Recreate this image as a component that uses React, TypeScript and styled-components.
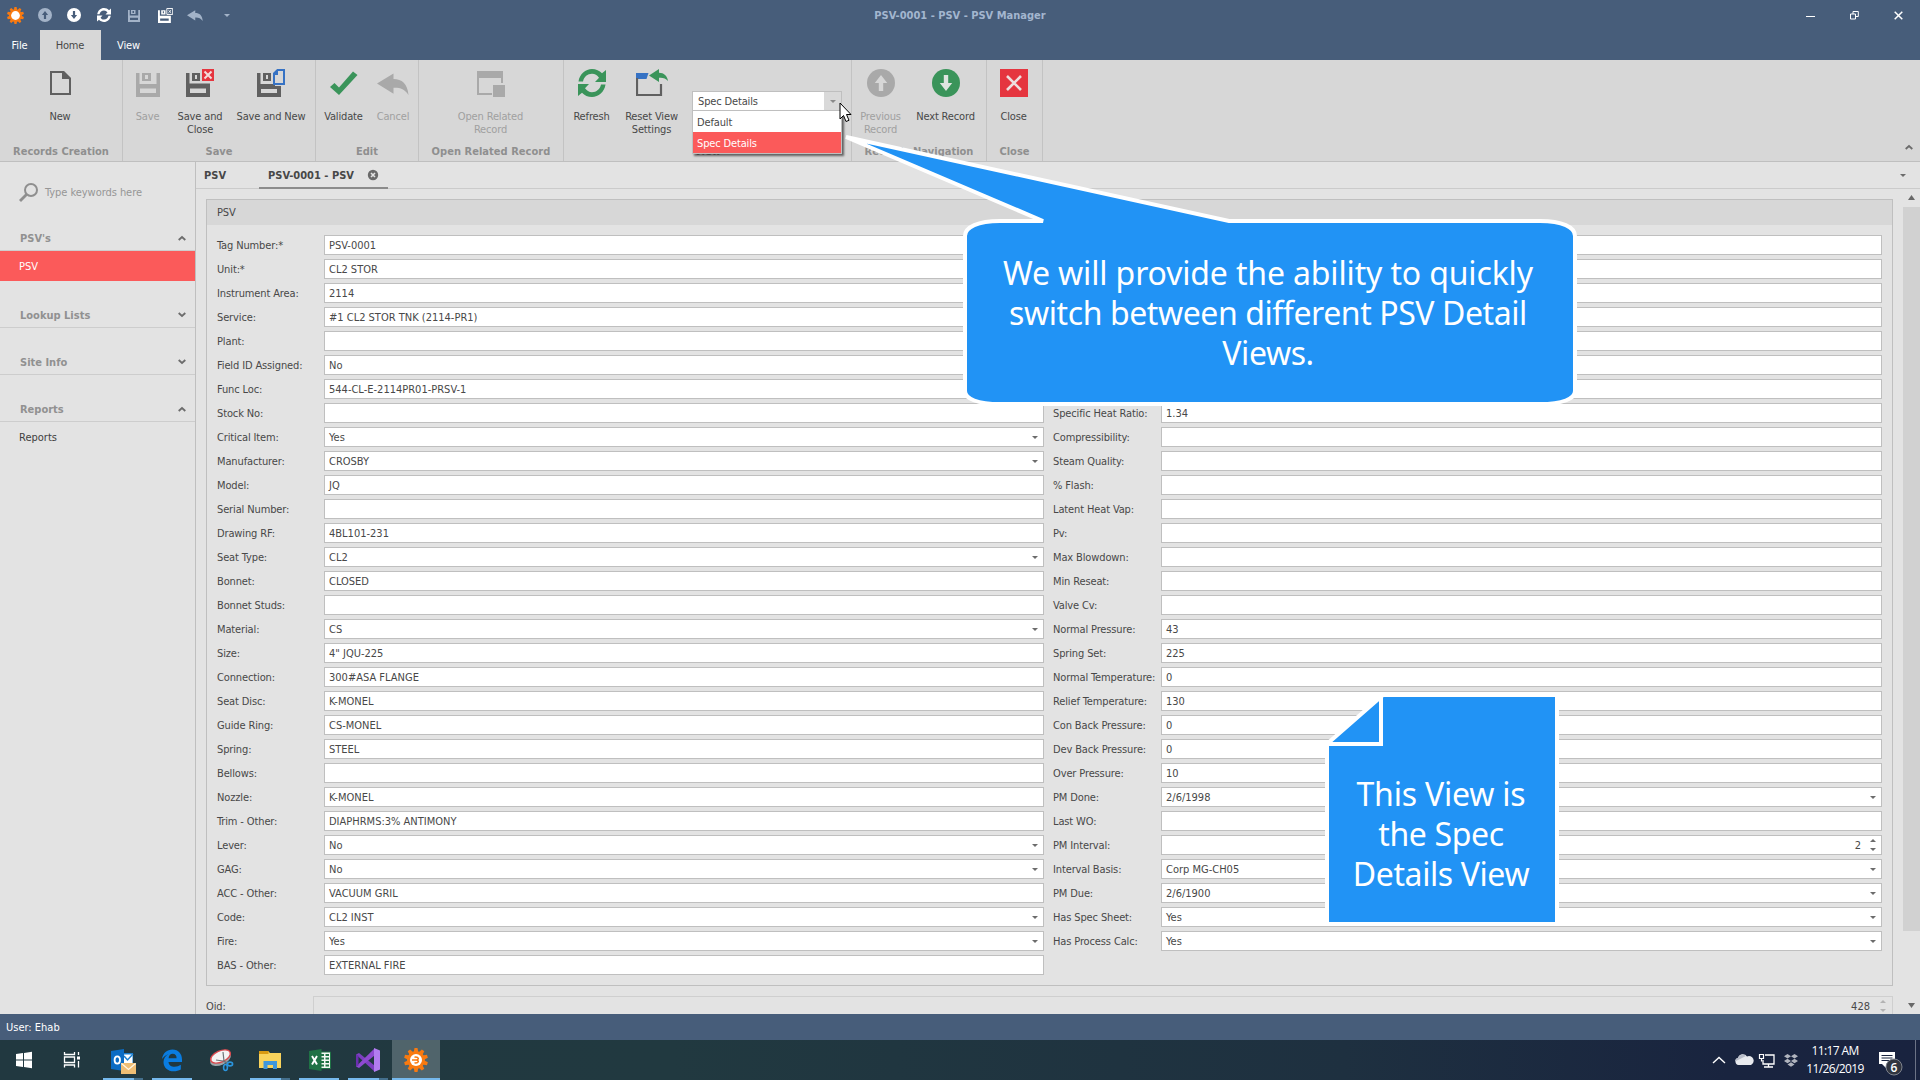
import React from 'react';
import styled, { createGlobalStyle } from 'styled-components';

const GlobalStyle = createGlobalStyle`
  * { box-sizing: border-box; }
  body {
    margin: 0;
    overflow: hidden;
    font: 11px/13px 'DejaVu Sans Condensed', 'DejaVu Sans', sans-serif;
    letter-spacing: -0.15px;
    color: #484848;
    white-space: nowrap;
  }
  svg { display: block; flex: none; }
`;

const NAVY = '#475d7a';
const BORDER = '#bfbfbf';
const GREY = '#a9a9a9';
const DARK = '#606060';
const GREEN = '#3a945a';
const RED = '#e5353f';
const BLUE = '#2193f5';

const Screen = styled.div`
  position: relative;
  width: 1920px;
  height: 1080px;
  display: flex;
  flex-direction: column;
  background: #e3e3e3;
  overflow: hidden;
`;

/* ---------- title bar ---------- */
const TitleBar = styled.header`
  height: 30px;
  background: ${NAVY};
  display: grid;
  grid-template-columns: 780px 360px 780px;
  align-items: center;
`;
const QuickAccess = styled.div`
  display: flex;
  align-items: center;
  padding-left: 1px;
`;
const QuickItem = styled.span<{ $w?: number }>`
  width: ${(p) => p.$w ?? 30}px;
  height: 30px;
  display: grid;
  place-items: center;
`;
const WindowTitle = styled.div`
  text-align: center;
  font-weight: bold;
  letter-spacing: 0;
  color: #a3b6cf;
`;
const WindowButtons = styled.div`
  display: flex;
  justify-content: flex-end;
`;
const WindowButton = styled.span`
  width: 44px;
  height: 30px;
  display: grid;
  place-items: center;
`;
const RibbonTabs = styled.nav`
  height: 30px;
  display: flex;
  background: ${NAVY};
`;
const RibbonTab = styled.div<{ $w: number; $active?: boolean }>`
  width: ${(p) => p.$w}px;
  display: grid;
  place-items: center;
  padding-right: 1px;
  background: ${(p) => (p.$active ? '#d7d7d7' : 'transparent')};
  color: ${(p) => (p.$active ? '#484848' : '#fff')};
`;

/* ---------- ribbon ---------- */
const Ribbon = styled.section`
  height: 102px;
  display: flex;
  background: #d7d7d7;
  border-bottom: 1px solid ${BORDER};
`;
const Group = styled.div<{ $w: number }>`
  width: ${(p) => p.$w}px;
  border-right: 1px solid #c3c3c3;
  display: flex;
  flex-direction: column;
`;
const GroupItems = styled.div<{ $pad: number }>`
  height: 85px;
  padding: 9px 0 0 ${(p) => p.$pad}px;
  display: flex;
`;
const GroupTitle = styled.div<{ $ls?: number }>`
  text-align: center;
  font-weight: bold;
  letter-spacing: ${(p) => p.$ls ?? 0}px;
  color: #8f8f8f;
`;
const RibbonButton = styled.div<{ $w: number; $off?: boolean }>`
  width: ${(p) => p.$w}px;
  display: flex;
  flex-direction: column;
  align-items: center;
  gap: 13px;
  text-align: center;
  white-space: pre-line;
  color: ${(p) => (p.$off ? '#a0a0a0' : '#484848')};
`;
const ComboArea = styled.div`
  padding: 22px 0 0 8px;
  position: relative;
`;
const Combo = styled.div`
  width: 150px;
  height: 20px;
  border: 1px solid ${BORDER};
  background: #fff;
  display: flex;
  align-items: center;
  justify-content: space-between;
  padding-left: 5px;
`;
const ComboButton = styled.span`
  width: 17px;
  height: 18px;
  display: grid;
  place-items: center;
  background: #d9d9d9;
`;
const Popup = styled.div`
  position: absolute;
  left: 8px;
  top: 41px;
  width: 150px;
  z-index: 5;
  border: 1px solid ${BORDER};
  box-shadow: 2px 2px 2px rgba(0, 0, 0, 0.55);
`;
const PopupItem = styled.div<{ $on?: boolean }>`
  height: 21px;
  padding: 2px 0 0 4px;
  display: flex;
  align-items: center;
  background: ${(p) => (p.$on ? '#fb5a5a' : '#fff')};
  color: ${(p) => (p.$on ? '#fff' : '#484848')};
`;
const RibbonCollapse = styled.div`
  flex: 1;
  display: flex;
  justify-content: flex-end;
  align-items: flex-end;
  padding: 0 7px 11px 0;
`;

/* ---------- body ---------- */
const Body = styled.div`
  height: 852px;
  display: flex;
`;
const Sidebar = styled.aside`
  width: 196px;
  border-right: 1px solid ${BORDER};
`;
const Search = styled.div`
  height: 65px;
  padding: 20px 0 0 19px;
  display: flex;
  gap: 7px;
  line-height: 21px;
  letter-spacing: -0.05px;
  color: #969696;
`;
const NavSection = styled.div`
  margin-bottom: 23px;
`;
const NavHeader = styled.div`
  height: 24px;
  padding: 0 9px 1px 20px;
  border-bottom: 1px solid #cdcdcd;
  display: flex;
  align-items: center;
  justify-content: space-between;
  font-weight: bold;
  letter-spacing: 0;
  color: #919191;
`;
const NavItem = styled.div<{ $on?: boolean }>`
  height: 30px;
  padding-left: 19px;
  display: flex;
  align-items: center;
  background: ${(p) => (p.$on ? '#fb5a5a' : 'transparent')};
  color: ${(p) => (p.$on ? '#fff' : '#404040')};
  letter-spacing: 0;
`;
const Main = styled.main`
  width: 1724px;
  display: flex;
  flex-direction: column;
`;
const DocTabs = styled.div`
  height: 27px;
  border-bottom: 1px solid #cbcbcb;
  display: flex;
  font-weight: bold;
  color: #474747;
`;
const DocTab = styled.div<{ $w: number; $on?: boolean }>`
  width: ${(p) => p.$w}px;
  height: 27px;
  padding: 7px 0 0 ${(p) => (p.$on ? 9 : 8)}px;
  display: flex;
  gap: 13px;
  letter-spacing: 0;
  border-bottom: ${(p) => (p.$on ? '2px solid #8c8c8c' : 'none')};
`;
const DocTabsMenu = styled.div`
  flex: 1;
  display: flex;
  justify-content: flex-end;
  padding: 12px 14px 0 0;
`;
const Content = styled.div`
  height: 825px;
  display: flex;
  justify-content: space-between;
`;
const Sheet = styled.div`
  width: 1697px;
  padding: 10px 0 0 10px;
  overflow: hidden;
`;
const Panel = styled.section`
  height: 787px;
  border: 1px solid ${BORDER};
`;
const PanelHeader = styled.div`
  height: 25px;
  padding: 6px 0 0 10px;
  background: #d7d7d7;
`;
const Columns = styled.div`
  display: flex;
  gap: 9px;
  padding: 10px;
`;
const Column = styled.div<{ $label: number; $input: number }>`
  display: grid;
  grid-template-columns: ${(p) => p.$label}px ${(p) => p.$input}px;
  grid-auto-rows: 20px;
  row-gap: 4px;
  align-content: start;
  align-items: center;
`;
const Label = styled.label`
  letter-spacing: -0.13px;
`;
const Input = styled.div<{ $right?: boolean; $flat?: boolean }>`
  height: 20px;
  border: 1px solid ${(p) => (p.$flat ? '#cfcfcf' : BORDER)};
  background: ${(p) => (p.$flat ? 'transparent' : '#fff')};
  display: flex;
  align-items: center;
  padding: 0 4px;
  gap: 8px;
  letter-spacing: 0;
  & > span { flex: 1; text-align: ${(p) => (p.$right ? 'right' : 'left')}; }
`;
const OidRow = styled.div`
  margin-top: 10px;
  display: grid;
  grid-template-columns: 107px 1580px;
  align-items: center;
`;
const ScrollBar = styled.div`
  width: 17px;
  padding: 6px 0;
  display: flex;
  flex-direction: column;
  align-items: center;
  justify-content: space-between;
`;
const Thumb = styled.div`
  width: 17px;
  height: 724px;
  margin: 7px 0 auto;
  background: #d1d1d1;
`;
const StatusBar = styled.footer`
  height: 26px;
  padding-left: 6px;
  display: flex;
  align-items: center;
  background: ${NAVY};
  color: #fff;
  letter-spacing: 0;
`;

/* ---------- task bar ---------- */
const TaskBar = styled.div`
  height: 40px;
  display: flex;
  justify-content: space-between;
  background: linear-gradient(90deg, #213840 0, #213940 35%, #1e3040 70%, #19243f 90%, #19233f 100%);
`;
const TaskGroup = styled.div`
  display: flex;
`;
const TaskItem = styled.div<{ $run?: boolean; $stack?: boolean; $on?: boolean; $w?: number }>`
  width: ${(p) => p.$w ?? 49}px;
  height: 40px;
  padding-top: 2px;
  display: flex;
  flex-direction: column;
  align-items: center;
  justify-content: space-between;
  background: ${(p) => (p.$on ? '#50646b' : 'transparent')};
  &::after {
    content: '';
    height: 2px;
    width: ${(p) => (p.$on ? 48 : 40)}px;
    background: ${(p) =>
      p.$stack
        ? 'linear-gradient(90deg, #76b9ed 0 31px, #446f8c 31px)'
        : p.$run || p.$on
          ? '#76b9ed'
          : 'transparent'};
  }
`;
const Tray = styled.div`
  display: flex;
  align-items: center;
  color: #fff;
`;
const Clock = styled.div`
  width: 70px;
  text-align: center;
  font: 12px/18px 'Open Sans', sans-serif;
  letter-spacing: -0.62px;
`;
const Notice = styled.div`
  width: 37px;
  margin-left: 8px;
`;
const ShowDesktop = styled.div`
  width: 5px;
  height: 40px;
  border-left: 1px solid #6c7386;
`;

/* ---------- annotations over the window ---------- */
const Overlay = styled.svg<{ $x: number; $y: number; $z?: number }>`
  position: absolute;
  left: ${(p) => p.$x}px;
  top: ${(p) => p.$y}px;
  z-index: ${(p) => p.$z ?? 3};
`;
const Note = styled.div<{ $x: number; $y: number; $w: number }>`
  position: absolute;
  z-index: 4;
  left: ${(p) => p.$x}px;
  top: ${(p) => p.$y}px;
  width: ${(p) => p.$w}px;
  text-align: center;
  font: 32px/40px 'Noto Sans', sans-serif;
  color: #fff;
`;
const NoteLine = styled.div<{ $ls: number }>`
  letter-spacing: ${(p) => p.$ls}px;
`;

/* ---------- icons ---------- */
const Caret = ({ up, size = 8, color = '#6c6c6c' }: { up?: boolean; size?: number; color?: string }) => (
  <svg width={size} height={size / 2} viewBox="0 0 8 4">
    <path d={up ? 'M0 4h8L4 0z' : 'M0 0h8L4 4z'} fill={color} />
  </svg>
);
const ScrollArrow = ({ up }: { up?: boolean }) => (
  <svg width="7" height="5" viewBox="0 0 7 5">
    <path d={up ? 'M0 5h7L3.500 0z' : 'M0 0h7L3.500 5z'} fill="#686868" />
  </svg>
);
const Chevron = ({ up }: { up?: boolean }) => (
  <svg width="8" height="6" viewBox="0 0 8 6">
    <path d={up ? 'M.7 5L4 2l3.300 3' : 'M.7 1L4 4l3.300-3'} fill="none" stroke="#6c6c6c" strokeWidth="1.800" />
  </svg>
);
const Floppy = ({ color, badge, s = 28 }: { color: string; badge?: 'x' | 'doc' | 'mini'; s?: number }) => (
  <svg width={s} height={s} viewBox="0 0 28 28">
    <path
      d={
        badge === 'doc'
          ? 'M0 4h3.500v11H18v2h6v11H0zM4 20v4h16v-4z'
          : badge
            ? 'M0 4h3.500v10.500H24V28H0zM4 19.500V24h16v-4.500z'
            : 'M2 4h3.500v11h17V4H26v24H2zM6 19.500V24h16v-4.500z'
      }
      fillRule="evenodd"
      fill={color}
    />
    <path d={badge ? 'M6 4h8v8H6zM9 6v4h2V6z' : 'M8 4h9v8H8zM11 6v4h3V6z'} fillRule="evenodd" fill={color} />
    {badge === 'x' && (
      <>
        <path d="M16 0h12v12H16z" fill={RED} />
        <path d="M18.500 2.500l7 7m0-7l-7 7" stroke="#f4dcdc" strokeWidth="2" />
      </>
    )}
    {badge === 'mini' && (
      <>
        <path d="M16.500 1h11v11h-11z" fill="none" stroke={color} strokeWidth="1.800" />
        <path d="M19.500 4l5 5m0-5l-5 5" stroke={color} strokeWidth="1.800" />
      </>
    )}
    {badge === 'doc' && (
      <>
        <path d="M20.500 1H27v14H17V4.500z" fill="#d7d7d7" stroke="#3672c4" strokeWidth="2" />
        <path d="M16 6V5l5-5v6z" fill="#3672c4" />
      </>
    )}
  </svg>
);
const Undo = ({ w, color }: { w: number; color: string }) => (
  <svg width={w} height={w * 0.875} viewBox="0 0 32 28">
    <path d="M0 14.500L16.500 4.500v5.500c8.500 0 14 4.500 15 16C27.500 20 23 18.500 16.500 18.800v6z" fill={color} />
  </svg>
);
const RefreshIcon = ({ w, color }: { w: number; color: string }) => (
  <svg width={w} height={w} viewBox="0 0 28 28">
    <path
      d="M0.500 12.500C1.500 5 7.500 0 14 0c4 0 7.500 1.600 10 4.300L28 1v12H17l4-4.300C19.300 6.300 17 4.800 14 4.800c-4.500 0-8 3-9 7.700z"
      fill={color}
    />
    <path
      d="M27.500 15.500C26.500 23 20.500 28 14 28c-4 0-7.500-1.600-10-4.300L0 27V15h11l-4 4.300c1.700 2.400 4 3.900 7 3.900 4.500 0 8-3 9-7.700z"
      fill={color}
    />
  </svg>
);
const CircleArrow = ({ w, color, arrow, down }: { w: number; color: string; arrow: string; down?: boolean }) => (
  <svg width={w} height={w} viewBox="0 0 28 28">
    <circle cx="14" cy="14" r="14" fill={color} />
    <path
      d={down ? 'M11.800 6h4.400v8h4L14 22l-6.200-8h4z' : 'M11.800 22h4.400v-8h4L14 6l-6.200 8h4z'}
      fill={arrow}
    />
  </svg>
);
const Gear = ({ size, inner }: { size: number; inner?: boolean }) => (
  <svg width={size} height={size} viewBox="-12 -12 24 24">
    {[0, 36, 72, 108, 144, 180, 216, 252, 288, 324].map((a) => (
      <path key={a} d="M-2.300 -7.500L-1.500 -12H1.500L2.300 -7.500z" fill="#f97a10" transform={`rotate(${a})`} />
    ))}
    <circle r="9" fill="#f97a10" />
    <circle r={inner ? 6 : 6.200} fill="#fff" />
    {inner && (
      <path
        d="M-4 0H1M-1.500 -2.800C3 -3.400 3.300 -0.300 0.500 0C3.300 0.300 3 3.400 -1.500 2.800"
        fill="none"
        stroke="#f97a10"
        strokeWidth="1.500"
      />
    )}
  </svg>
);

/* ---------- data ---------- */
type Kind = 'text' | 'drop' | 'spin';
type Field = [string, string, Kind?];

const leftFields: Field[] = [
  ['Tag Number:*', 'PSV-0001'],
  ['Unit:*', 'CL2 STOR'],
  ['Instrument Area:', '2114'],
  ['Service:', '#1 CL2 STOR TNK (2114-PR1)'],
  ['Plant:', ''],
  ['Field ID Assigned:', 'No'],
  ['Func Loc:', '544-CL-E-2114PR01-PRSV-1'],
  ['Stock No:', ''],
  ['Critical Item:', 'Yes', 'drop'],
  ['Manufacturer:', 'CROSBY', 'drop'],
  ['Model:', 'JQ'],
  ['Serial Number:', ''],
  ['Drawing RF:', '4BL101-231'],
  ['Seat Type:', 'CL2', 'drop'],
  ['Bonnet:', 'CLOSED'],
  ['Bonnet Studs:', ''],
  ['Material:', 'CS', 'drop'],
  ['Size:', '4" JQU-225'],
  ['Connection:', '300#ASA FLANGE'],
  ['Seat Disc:', 'K-MONEL'],
  ['Guide Ring:', 'CS-MONEL'],
  ['Spring:', 'STEEL'],
  ['Bellows:', ''],
  ['Nozzle:', 'K-MONEL'],
  ['Trim - Other:', 'DIAPHRMS:3% ANTIMONY'],
  ['Lever:', 'No', 'drop'],
  ['GAG:', 'No', 'drop'],
  ['ACC - Other:', 'VACUUM GRIL'],
  ['Code:', 'CL2 INST', 'drop'],
  ['Fire:', 'Yes', 'drop'],
  ['BAS - Other:', 'EXTERNAL FIRE'],
];
const rightFields: Field[] = [
  ['', ''], ['', ''], ['', ''], ['', ''], ['', ''], ['', ''], ['', ''],
  ['Specific Heat Ratio:', '1.34'],
  ['Compressibility:', ''],
  ['Steam Quality:', ''],
  ['% Flash:', ''],
  ['Latent Heat Vap:', ''],
  ['Pv:', ''],
  ['Max Blowdown:', ''],
  ['Min Reseat:', ''],
  ['Valve Cv:', ''],
  ['Normal Pressure:', '43'],
  ['Spring Set:', '225'],
  ['Normal Temperature:', '0'],
  ['Relief Temperature:', '130'],
  ['Con Back Pressure:', '0'],
  ['Dev Back Pressure:', '0'],
  ['Over Pressure:', '10'],
  ['PM Done:', '2/6/1998', 'drop'],
  ['Last WO:', ''],
  ['PM Interval:', '2', 'spin'],
  ['Interval Basis:', 'Corp MG-CH05', 'drop'],
  ['PM Due:', '2/6/1900', 'drop'],
  ['Has Spec Sheet:', 'Yes', 'drop'],
  ['Has Process Calc:', 'Yes', 'drop'],
];

const SpinBox = styled.i`
  display: flex;
  flex-direction: column;
  gap: 6px;
  margin: 0 1px;
`;
const DropMark = styled.i`
  margin-right: 1px;
`;
const Spinner = ({ color }: { color?: string }) => (
  <SpinBox>
    <Caret up size={6} color={color} />
    <Caret size={6} color={color} />
  </SpinBox>
);

const FieldColumn = ({ fields, label, input }: { fields: Field[]; label: number; input: number }) => (
  <Column $label={label} $input={input}>
    {fields.map(([name, value, kind], i) => (
      <React.Fragment key={i}>
        <Label>{name}</Label>
        <Input $right={kind === 'spin'}>
          <span>{value}</span>
          {kind === 'drop' && (
            <DropMark>
              <Caret size={6} />
            </DropMark>
          )}
          {kind === 'spin' && <Spinner />}
        </Input>
      </React.Fragment>
    ))}
  </Column>
);

export default function App() {
  return (
    <Screen>
      <GlobalStyle />
      <TitleBar>
        <QuickAccess>
          <QuickItem $w={29}><Gear size={17} /></QuickItem>
          <QuickItem $w={29}><CircleArrow w={14} color="#a3b3c8" arrow={NAVY} /></QuickItem>
          <QuickItem><CircleArrow w={14} color="#fff" arrow={NAVY} down /></QuickItem>
          <QuickItem><RefreshIcon w={14} color="#fff" /></QuickItem>
          <QuickItem><Floppy s={14} color="#a3b3c8" /></QuickItem>
          <QuickItem $w={32}><Floppy s={15} color="#fff" badge="mini" /></QuickItem>
          <QuickItem $w={28}><Undo w={16} color="#a3b3c8" /></QuickItem>
          <QuickItem $w={36}><Caret size={6} color="#a3b3c8" /></QuickItem>
        </QuickAccess>
        <WindowTitle>PSV-0001 - PSV - PSV Manager</WindowTitle>
        <WindowButtons>
          <WindowButton>
            <svg width="9" height="9"><path d="M0 5.500h9" stroke="#fff" /></svg>
          </WindowButton>
          <WindowButton>
            <svg width="9" height="9" viewBox="0 0 9 9"><path d="M.5 3h5v5h-5zM3 3V.5h5.300v5H6" fill="none" stroke="#fff" /></svg>
          </WindowButton>
          <WindowButton>
            <svg width="9" height="9" viewBox="0 0 9 9"><path d="M.7.7l7.600 7.600m0-7.600L.7 8.300" stroke="#fff" strokeWidth="1.500" /></svg>
          </WindowButton>
        </WindowButtons>
      </TitleBar>
      <RibbonTabs>
        <RibbonTab $w={40}>File</RibbonTab>
        <RibbonTab $w={61} $active>Home</RibbonTab>
        <RibbonTab $w={56}>View</RibbonTab>
      </RibbonTabs>

      <Ribbon>
        <Group $w={123}>
          <GroupItems $pad={0}>
            <RibbonButton $w={120}>
              <svg width="28" height="28" viewBox="0 0 28 28">
                <path d="M5 3h12l7 7v15H5z" fill="none" stroke={DARK} strokeWidth="2" />
                <path d="M16 2h2l7 7v1h-9z" fill={DARK} />
              </svg>
              New
            </RibbonButton>
          </GroupItems>
          <GroupTitle>Records Creation</GroupTitle>
        </Group>
        <Group $w={193}>
          <GroupItems $pad={3}>
            <RibbonButton $w={43} $off><Floppy color={GREY} />Save</RibbonButton>
            <RibbonButton $w={62}><Floppy color={DARK} badge="x" />{'Save and\nClose'}</RibbonButton>
            <RibbonButton $w={80}><Floppy color={DARK} badge="doc" />Save and New</RibbonButton>
          </GroupItems>
          <GroupTitle>Save</GroupTitle>
        </Group>
        <Group $w={103}>
          <GroupItems $pad={2}>
            <RibbonButton $w={51}>
              <svg width="28" height="28" viewBox="0 0 28 28">
                <path d="M0 18l4.500-4L9 18.500 23 2.500l4.500 3.500L9 26z" fill={GREEN} />
              </svg>
              Validate
            </RibbonButton>
            <RibbonButton $w={48} $off><Undo w={32} color={GREY} />Cancel</RibbonButton>
          </GroupItems>
          <GroupTitle>Edit</GroupTitle>
        </Group>
        <Group $w={145}>
          <GroupItems $pad={0}>
            <RibbonButton $w={143} $off>
              <svg width="28" height="28" viewBox="0 0 28 28">
                <path d="M0 2h26v12h-2V9H2v15h13v2H0z" fill={GREY} />
                <path d="M16 16h12v12H16z" fill={GREY} />
              </svg>
              {'Open Related\nRecord'}
            </RibbonButton>
          </GroupItems>
          <GroupTitle $ls={0.04}>Open Related Record</GroupTitle>
        </Group>
        <Group $w={288}>
          <GroupItems $pad={0}>
            <RibbonButton $w={55}><RefreshIcon w={28} color={GREEN} />Refresh</RibbonButton>
            <RibbonButton $w={65}>
              <svg width="32" height="28" viewBox="0 0 32 28">
                <path d="M0 4h12.500l-2 6H0z" fill="#3672c4" />
                <path d="M1 9v17h24V15" fill="none" stroke={DARK} strokeWidth="2.200" />
                <path d="M13 6.500L23 0v3.800c5 0 8 3 9 8.200-2.500-3-5-3.400-9-3.200V13z" fill={GREEN} />
              </svg>
              {'Reset View\nSettings'}
            </RibbonButton>
            <ComboArea>
              <Combo>
                Spec Details
                <ComboButton><Caret size={6} color="#8a8a8a" /></ComboButton>
              </Combo>
              <Popup>
                <PopupItem>Default</PopupItem>
                <PopupItem $on>Spec Details</PopupItem>
              </Popup>
            </ComboArea>
          </GroupItems>
          <GroupTitle>View</GroupTitle>
        </Group>
        <Group $w={135}>
          <GroupItems $pad={0}>
            <RibbonButton $w={57} $off><CircleArrow w={28} color={GREY} arrow="#d7d7d7" />{'Previous\nRecord'}</RibbonButton>
            <RibbonButton $w={73}><CircleArrow w={28} color={GREEN} arrow="#dfe5e0" down />Next Record</RibbonButton>
          </GroupItems>
          <GroupTitle>Records Navigation</GroupTitle>
        </Group>
        <Group $w={56}>
          <GroupItems $pad={0}>
            <RibbonButton $w={53}>
              <svg width="28" height="28" viewBox="0 0 28 28">
                <path d="M0 0h28v28H0z" fill={RED} />
                <path d="M7 7l14 14m0-14L7 21" stroke="#eedede" strokeWidth="2.600" />
              </svg>
              Close
            </RibbonButton>
          </GroupItems>
          <GroupTitle>Close</GroupTitle>
        </Group>
        <RibbonCollapse><Chevron up /></RibbonCollapse>
      </Ribbon>

      <Body>
        <Sidebar>
          <Search>
            <svg width="19" height="20" viewBox="0 0 19 20">
              <circle cx="12" cy="8" r="6" fill="none" stroke="#8f8f8f" strokeWidth="2" />
              <path d="M7.500 12.500L1 19" stroke="#8f8f8f" strokeWidth="2.800" />
            </svg>
            Type keywords here
          </Search>
          <NavSection>
            <NavHeader>PSV's<Chevron up /></NavHeader>
            <NavItem $on>PSV</NavItem>
          </NavSection>
          <NavSection><NavHeader>Lookup Lists<Chevron /></NavHeader></NavSection>
          <NavSection><NavHeader>Site Info<Chevron /></NavHeader></NavSection>
          <NavSection>
            <NavHeader>Reports<Chevron up /></NavHeader>
            <NavItem>Reports</NavItem>
          </NavSection>
        </Sidebar>
        <Main>
          <DocTabs>
            <DocTab $w={63}>PSV</DocTab>
            <DocTab $w={129} $on>
              PSV-0001 - PSV
              <svg width="12" height="12" viewBox="0 0 12 12">
                <circle cx="6" cy="6" r="5.200" fill="#6a6a6a" />
                <path d="M4 4l4 4m0-4L4 8" stroke="#e3e3e3" strokeWidth="1.600" />
              </svg>
            </DocTab>
            <DocTabsMenu><Caret size={6} /></DocTabsMenu>
          </DocTabs>
          <Content>
            <Sheet>
              <Panel>
                <PanelHeader>PSV</PanelHeader>
                <Columns>
                  <FieldColumn fields={leftFields} label={107} input={720} />
                  <FieldColumn fields={rightFields} label={108} input={721} />
                </Columns>
              </Panel>
              <OidRow>
                <Label>Oid:</Label>
                <Input $right $flat>
                  <span>428</span>
                  <SpinBox><Spinner color="#b3b3b3" /></SpinBox>
                </Input>
              </OidRow>
            </Sheet>
            <ScrollBar>
              <ScrollArrow up />
              <Thumb />
              <ScrollArrow />
            </ScrollBar>
          </Content>
        </Main>
      </Body>
      <StatusBar>User: Ehab</StatusBar>

      <TaskBar>
        <TaskGroup>
          <TaskItem $w={48}>
            <svg width="36" height="36" viewBox="0 0 36 36">
              <path d="M10 12l7-1v6.500h-7zM18 10.900l8-1.100v7.700h-8zM10 18.500h7V25l-7-1zM18 18.500h8v7.700l-8-1.100z" fill="#fff" />
            </svg>
          </TaskItem>
          <TaskItem $w={49}>
            <svg width="36" height="36" viewBox="0 0 36 36" fill="none" stroke="#fff" strokeWidth="1.300">
              <path d="M9.500 10v2.500h10V10M9.500 25.500v-2.500h10v2.500M9.500 15h10v5.500h-10zM23.500 10v3M23.500 19v6.500" />
              <path d="M22 14.500h3v3h-3z" fill="#fff" stroke="none" />
            </svg>
          </TaskItem>
          <TaskItem $stack $w={51}>
            <svg width="36" height="36" viewBox="0 0 36 36">
              <path d="M18 11h10v13H18z" fill="#1b7fd0" />
              <path d="M18 12.500h9.500v9H18z" fill="#fff" />
              <path d="M19 14l3.500 4L28 12" fill="none" stroke="#1b7fd0" strokeWidth="1.500" />
              <path d="M6 9l13-2v22L6 27z" fill="#0b6cc4" />
              <ellipse cx="12.300" cy="18" rx="2.700" ry="3.600" fill="none" stroke="#fff" strokeWidth="1.800" />
              <path d="M16 21h15v11H16z" fill="#efbd74" />
              <path d="M16.500 21.500l7 6 7-6" fill="none" stroke="#fff6e4" strokeWidth="1.300" />
            </svg>
          </TaskItem>
          <TaskItem $run $w={48}>
            <svg width="36" height="36" viewBox="0 0 36 36">
              <path
                d="M8 17C9 11 13 7.500 18.500 7.500c6 0 9.500 4.500 9.500 10V20H14.500c.3 3.300 3 4.800 6 4.800 2.400 0 4.600-.8 6.300-2V27.500c-2 1.200-4.600 1.800-7 1.800-6 0-10.300-3.600-10.300-9.300 0-3.500 2-6.500 5-8-2.500 1-5 2.800-6.500 5zM14.600 16.200h8c0-2.600-1.400-4.400-3.900-4.400-2.400 0-4 1.900-4.100 4.400z"
                fill="#0a7ce0"
                fillRule="evenodd"
              />
            </svg>
          </TaskItem>
          <TaskItem>
            <svg width="36" height="36" viewBox="0 0 36 36">
              <ellipse cx="17.500" cy="17" rx="11" ry="6" transform="rotate(-24 17.500 17)" fill="#9aa4a8" />
              <ellipse cx="17.500" cy="14.500" rx="10.500" ry="5.600" transform="rotate(-24 17.500 14.500)" fill="#f3f3f3" stroke="#d9484d" strokeWidth="1.400" />
              <path d="M20 10l1 9 4 4M13 18l7 1 6 2" stroke="#6c7377" strokeWidth="1.200" fill="none" />
              <ellipse cx="22.500" cy="25.500" rx="1.900" ry="3" fill="none" stroke="#2b95dd" strokeWidth="1.600" />
              <ellipse cx="27" cy="22" rx="2.600" ry="1.900" fill="none" stroke="#2b95dd" strokeWidth="1.600" />
            </svg>
          </TaskItem>
          <TaskItem $stack>
            <svg width="36" height="36" viewBox="0 0 36 36">
              <path d="M7 9h9l2 2h11v15H7z" fill="#f9d35c" />
              <path d="M7 9h9.500v3H7z" fill="#d99a12" />
              <path d="M11.500 27v-8h13.500v8h-4v-4h-5.500v4z" fill="#3f97dd" />
            </svg>
          </TaskItem>
          <TaskItem $run>
            <svg width="36" height="36" viewBox="0 0 36 36">
              <path d="M18 10h11.500v16.500H18z" fill="#f2f7f3" stroke="#1f7245" />
              <path d="M20 13h3m1.500 0h3.500M20 16.500h3m1.500 0h3.500M20 20h3m1.500 0h3.500M20 23.500h3m1.500 0h3.500" stroke="#1f7245" strokeWidth="2" />
              <path d="M8 9l12.500-2v22L8 27z" fill="#1f7245" />
              <path d="M11 14l5 8.500m0-8.500l-5 8.500" stroke="#fff" strokeWidth="1.900" />
            </svg>
          </TaskItem>
          <TaskItem $stack>
            <svg width="36" height="36" viewBox="0 0 36 36">
              <path d="M6 12.500L9 11l15.500 12.500v6z" fill="#7d3fc0" />
              <path d="M6 24.500L9 26l15.500-12.500v-7z" fill="#8e4ad0" />
              <path d="M6 12.500L8.500 13.500v10L6 24.500z" fill="#6b2fb0" />
              <path d="M24 6l6 2.500v19L24 30z" fill="#b27df0" />
            </svg>
          </TaskItem>
          <TaskItem $on $w={48}>
            <svg width="36" height="36" viewBox="0 0 36 36">
              <g transform="translate(6 6)"><Gear size={24} inner /></g>
            </svg>
          </TaskItem>
        </TaskGroup>
        <Tray>
          <svg width="90" height="40" viewBox="1710 1040 90 40">
            <path d="M1713 1063l6-5.500 6 5.500" fill="none" stroke="#fff" strokeWidth="1.400" />
            <path d="M1738.500 1065a3.600 3.600 0 0 1-.5-7 5 5 0 0 1 9-1.500 4.500 4.500 0 0 1 4 8.500z" fill="#e8eaee" />
            <path d="M1735 1061.500a4 4 0 0 1 3-3.800 5 5 0 0 1 8-1.700z" fill="#b9bec9" />
            <path d="M1765 1055h9v9h-11v-4M1768.500 1064v3M1764 1067h9" fill="none" stroke="#fff" strokeWidth="1.300" />
            <path d="M1759.500 1054.500h4v4h-4zM1761.500 1058.500v3" fill="none" stroke="#fff" strokeWidth="1.200" />
            <path
              d="M1787.500 1054l3.500 2.200-3.500 2.200-3.500-2.200zM1794.500 1054l3.500 2.200-3.500 2.200-3.500-2.200zM1787.500 1058.800l3.500 2.200-3.500 2.200-3.500-2.200zM1794.500 1058.800l3.500 2.200-3.500 2.200-3.500-2.200zM1791 1062.300l3.500 2.200-3.500 2.300-3.500-2.300z"
              fill="#b0b4be"
            />
          </svg>
          <Clock>11:17 AM<br />11/26/2019</Clock>
          <Notice>
            <svg width="30" height="40" viewBox="0 0 30 40">
              <path d="M1 12h16v12H8v4l-4-4H1z" fill="#fff" />
              <path d="M3.500 15.500h11M3.500 18h11M3.500 20.500h8" stroke="#19243f" strokeWidth="1.200" />
              <circle cx="16" cy="27" r="8" fill="#31353f" stroke="#7f848e" />
              <text x="16" y="31.500" textAnchor="middle" fontFamily="Open Sans, sans-serif" fontSize="12" fontWeight="600" letterSpacing="0" fill="#fff">6</text>
            </svg>
          </Notice>
          <ShowDesktop />
        </Tray>
      </TaskBar>

      <Overlay $x={840} $y={120} width="740" height="290" viewBox="840 120 740 290">
        <path
          d="M846 137L1229 221H1540C1562 221 1575 227 1575 236V391C1575 399 1562 404 1540 404H1000C978 404 965 399 965 391V236C965 227 978 221 1000 221H1043z"
          fill={BLUE}
          stroke="#fff"
          strokeWidth="4"
        />
      </Overlay>
      <Note $x={965} $y={253} $w={606}>
        <NoteLine $ls={-0.15}>We will provide the ability to quickly</NoteLine>
        <NoteLine $ls={-0.42}>switch between different PSV Detail</NoteLine>
        <NoteLine $ls={-0.4}>Views.</NoteLine>
      </Note>

      <Overlay $x={1320} $y={690} width="245" height="240" viewBox="1320 690 245 240">
        <path d="M1383 695H1557V924H1327V744z" fill={BLUE} stroke="#fff" strokeWidth="4" />
        <path d="M1327 744H1381V695" fill="none" stroke="#fff" strokeWidth="4" />
      </Overlay>
      <Note $x={1327} $y={774} $w={228}>
        <NoteLine $ls={-0.2}>This View is</NoteLine>
        <NoteLine $ls={-0.35}>the Spec</NoteLine>
        <NoteLine $ls={-0.4}>Details View</NoteLine>
      </Note>

      <Overlay $x={839} $y={102} $z={6} width="16" height="22" viewBox="0 0 16 22">
        <path d="M1 1v16l3.500-3.500 2.500 6 3-1.200-2.500-5.800H12z" fill="#fff" stroke="#000" />
      </Overlay>
    </Screen>
  );
}
